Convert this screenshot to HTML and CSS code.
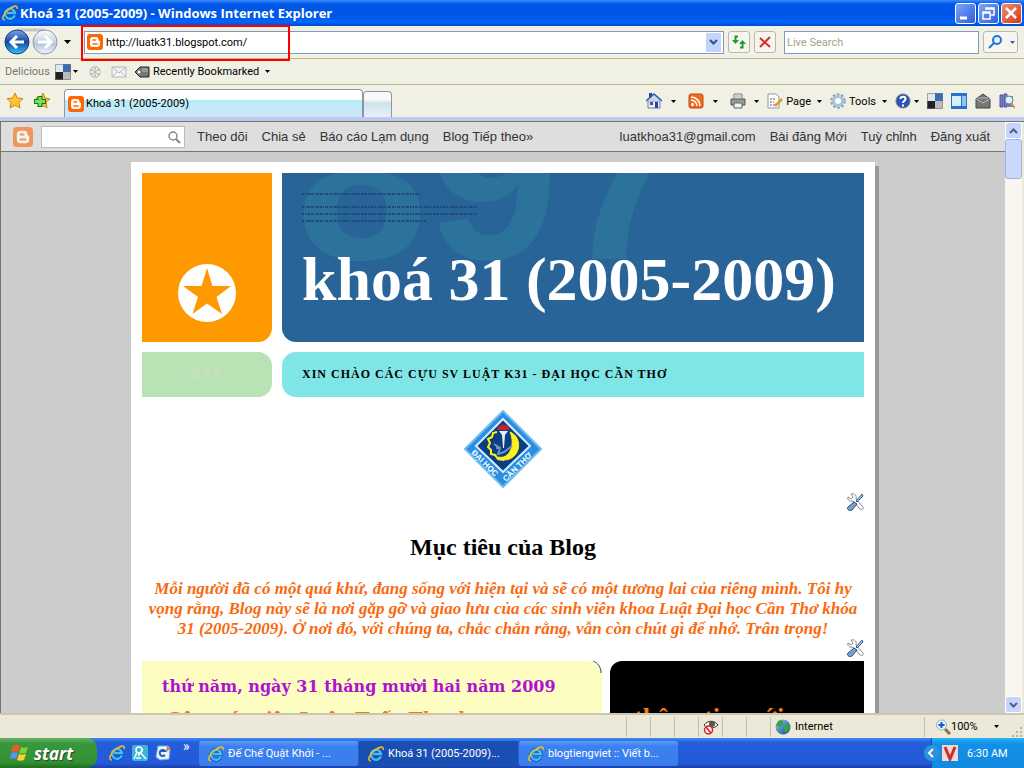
FILE: index.html
```
<!DOCTYPE html>
<html lang="vi">
<head>
    <meta charset="UTF-8">
    <title>Khoá 31 (2005-2009)</title>
    <meta name="viewport" content="width=device-width, initial-scale=1">
    <link rel="stylesheet" href="styles.css">
</head>
<body>
<svg class="defs" aria-hidden="true">
    <defs>
        <linearGradient id="ball" x1="0" y1="0" x2="0" y2="1"><stop offset="0" stop-color="#7aa9e8"/><stop offset=".5" stop-color="#14489f"/><stop offset="1" stop-color="#35c3ff"/></linearGradient>
        <linearGradient id="silver" x1="0" y1="0" x2="0" y2="1"><stop offset="0" stop-color="#fff"/><stop offset=".6" stop-color="#b9c7dc"/><stop offset="1" stop-color="#eef8ff"/></linearGradient>
        <linearGradient id="earth" x1="0" y1="0" x2="1" y2="1"><stop offset="0" stop-color="#8fd0ff"/><stop offset="1" stop-color="#0a3f9e"/></linearGradient>
        <symbol id="ie" viewBox="0 0 16 16">
            <path d="M12.8 10.4A5 5 0 1 1 13 8H5" fill="none" stroke="#0b4fae" stroke-width="3.6"/>
            <path d="M12.8 10.4A5 5 0 1 1 13 8H5" fill="none" stroke="#45bdf5" stroke-width="2.4"/>
            <path d="M3 15C-1 15 1 9 6 5S16-1 15 4" fill="none" stroke="#f4b62c" stroke-width="1.6"/>
        </symbol>
        <symbol id="blogger" viewBox="0 0 16 16">
            <rect width="16" height="16" rx="3" fill="#f60"/>
            <path d="M6 3h3a2.5 2.5 0 0 1 2.5 2.5c0 1 .3 1.3 1.5 1.5v3a3 3 0 0 1-3 3H6a3 3 0 0 1-3-3V6a3 3 0 0 1 3-3z" fill="#fff"/>
            <path d="M6 6h2.5M6 10h4" stroke="#f60" stroke-width="1.5" stroke-linecap="round"/>
        </symbol>
        <symbol id="arrow" viewBox="0 0 7 4"><path d="M0 0h7L3.5 4z" fill="#000"/></symbol>
        <symbol id="wrench" viewBox="0 0 18 18">
            <path d="M2 4l3 2 2-2-2-3c4-1 6 2 5 5l7 8c1 2-1 3-3 2L7 8C4 9 1 7 2 4z" fill="#fff" stroke="#888"/>
            <path d="M16 1l1 2-6 6-1-1z" fill="#a8c9ee" stroke="#2c5f9e"/>
            <path d="M8 9l3 2-5 6c-2 2-6-1-4-3z" fill="#7fa2c4" stroke="#1d4f86"/>
        </symbol>
        <symbol id="squares" viewBox="0 0 16 16">
            <rect width="16" height="16" fill="#fff"/><path d="M8 0h8v8H8z" fill="#3a6bb5"/><path d="M0 8h8v8H0z" fill="#222"/><path d="M8 8h8v8H8z" fill="#bbb"/><path d="M0 0h8v8H0z" fill="#e4e8ee"/>
            <path d="M.5.5h15v15H.5z" fill="none" stroke="#777" stroke-opacity=".6"/>
        </symbol>
    </defs>
</svg>

<div class="window">
    <header class="titlebar">
        <svg class="i16"><use href="#ie"/></svg>
        <span class="caption">Khoá 31 (2005-2009) - Windows Internet Explorer</span>
        <button class="winbtn" aria-label="Minimize"><svg viewBox="0 0 19 19"><path d="M4 14h7" stroke="#fff" stroke-width="3"/></svg></button>
        <button class="winbtn" aria-label="Restore"><svg viewBox="0 0 19 19"><path d="M7 6V4h8v7h-3M4 8h7v7H4zM4 9h7M7 5h8" fill="none" stroke="#fff" stroke-width="1.5"/></svg></button>
        <button class="winbtn close" aria-label="Close"><svg viewBox="0 0 19 19"><path d="M4 4l10 10M14 4L4 14" stroke="#fff" stroke-width="2.5"/></svg></button>
    </header>

    <div class="bar address">
        <button class="plain travel" aria-label="Back and forward">
            <svg width="54" height="28" viewBox="0 0 54 28">
                <path d="M13 2h28" stroke="#c5c8ca" stroke-width="3"/>
                <circle cx="13" cy="14" r="12" fill="url(#ball)" stroke="#1b3d7c"/>
                <path d="M20 14H8M13 8l-6 6 6 6" fill="none" stroke="#fff" stroke-width="3"/>
                <circle cx="41" cy="14" r="12" fill="url(#silver)" stroke="#8b98ac"/>
                <path d="M34 14h12M41 8l6 6-6 6" fill="none" stroke="#fff" stroke-width="3"/>
            </svg>
        </button>
        <svg class="arr"><use href="#arrow"/></svg>
        <div class="field url">
            <svg class="i16"><use href="#blogger"/></svg>
            <input type="text" aria-label="Address" value="http://luatk31.blogspot.com/">
            <button class="drop" aria-label="Show addresses"><svg width="9" height="6" viewBox="0 0 9 6"><path d="M1 1l3.5 3.5L8 1" fill="none" stroke="#36518c" stroke-width="2"/></svg></button>
            <span class="highlight"></span>
        </div>
        <button class="square" aria-label="Refresh"><svg class="i16" viewBox="0 0 16 16"><path d="M7 2.5H4.5V7M9 13.5h2.5V9" fill="none" stroke="#219a21" stroke-width="2"/><path d="M1 6h7l-3.5 4zM8 10h7l-3.5-4z" fill="#219a21"/></svg></button>
        <button class="square" aria-label="Stop"><svg class="i16" viewBox="0 0 16 16"><path d="M3 4l10 9M13 3L3 13" stroke="#d32f2f" stroke-width="2"/></svg></button>
        <div class="field search"><input type="text" aria-label="Live Search" placeholder="Live Search"></div>
        <button class="square go" aria-label="Search">
            <svg class="i16" viewBox="0 0 16 16"><circle cx="10" cy="6" r="4" fill="#e6f3ff" stroke="#2070dd" stroke-width="2"/><path d="M7 9l-5 5" stroke="#2070dd" stroke-width="2"/></svg>
            <svg class="small" viewBox="0 0 7 4"><path d="M0 0h7L3.5 4z" fill="#2463c5"/></svg>
        </button>
    </div>

    <div class="bar bookmarks">
        <span class="delicious">Delicious</span>
        <svg class="i16"><use href="#squares"/></svg>
        <svg class="arr"><use href="#arrow"/></svg>
        <svg class="i16" viewBox="0 0 16 16"><path d="M8 2v12M3 5l10 6M13 5L3 11M6 2l2 3 2-3M6 14l2-3 2 3M2 7l3-1V3M14 9l-3 1v3M2 9l3 1v3M14 7l-3-1V3" fill="none" stroke="#b5b5b5"/></svg>
        <svg class="i16 mail" viewBox="0 0 16 16"><path d="M1 3h14v10H1zM1 3l7 6 7-6M1 13l5-5M15 13l-5-5" fill="#f6f6f6" stroke="#b5b5b5"/></svg>
        <button class="plain recent">
            <svg class="i16" viewBox="0 0 16 16"><path d="M1 8l5-5h9v10H6z" fill="#777" stroke="#222"/><circle cx="5" cy="8" r="1.5" fill="#fff"/><path d="M8 5h6M8 7h6" stroke="#bbb"/></svg>
            Recently Bookmarked
            <svg class="arr"><use href="#arrow"/></svg>
        </button>
    </div>

    <div class="bar tabs">
        <svg class="i16" viewBox="0 0 16 16"><path d="M8 0l2.3 5 5.7.6-4.2 3.9L13 15l-5-2.8L3 15l1.2-5.5L0 5.6 5.7 5z" fill="#ffc52f" stroke="#c98617"/></svg>
        <svg class="i16 addfav" viewBox="0 0 16 16"><path d="M9 0l2 5 5 1-4 3 1 6-5-3-4 2 1-5-3-4 5-1z" fill="#ffc52f" stroke="#c98617"/><path d="M6 3v11M0 8.5h12" stroke="#137a13" stroke-width="5"/><path d="M6 4v9M1 8.5h10" stroke="#7ddc62" stroke-width="3"/></svg>
        <button class="tab"><svg class="i16"><use href="#blogger"/></svg>Khoá 31 (2005-2009)</button>
        <button class="newtab" aria-label="New tab"></button>
        <div class="commands">
            <svg class="i16" viewBox="0 0 16 16"><path d="M2 8h12v7H2z" fill="#e8edf6" stroke="#6a7fa6"/><path d="M0 8l8-7 8 7" fill="#c7d4ec" stroke="#3256a4" stroke-width="1.5"/><path d="M3 0h3v4H3zM9 9h3v6H9z" fill="#2645a8"/><path d="M4 9h3v3H4z" fill="#557"/></svg>
            <svg class="arr wide"><use href="#arrow"/></svg>
            <svg class="i16" viewBox="0 0 16 16"><rect x="1" y="1" width="14" height="14" rx="2" fill="#f26a1b" stroke="#b94c10"/><circle cx="4.5" cy="11.5" r="1.5" fill="#fff"/><path d="M3 7a6 6 0 0 1 6 6M3 4a9 9 0 0 1 9 9" fill="none" stroke="#fff" stroke-width="1.5"/></svg>
            <svg class="arr wide"><use href="#arrow"/></svg>
            <svg class="i16" viewBox="0 0 16 16"><path d="M4 1h8v6H4z" fill="#fff" stroke="#777"/><path d="M1 6h14v6H1z" fill="#999" stroke="#555"/><path d="M4 10h8v5H4z" fill="#e6f5f5" stroke="#666"/><path d="M5 3h6M5 5h6" stroke="#999"/></svg>
            <svg class="arr"><use href="#arrow"/></svg>
            <button class="plain"><svg class="i16" viewBox="0 0 16 16"><path d="M1 1h8l3 3v11H1z" fill="#fff" stroke="#8e95a5"/><path d="M3 6h6M3 9h4M3 12h5" stroke="#557" stroke-dasharray="2 1"/><path d="M15 6l-7 7" stroke="#e29b24" stroke-width="2.5"/></svg>Page<svg class="arr"><use href="#arrow"/></svg></button>
            <button class="plain"><svg class="i16" viewBox="0 0 16 16"><circle cx="8" cy="8" r="6.5" fill="none" stroke="#8aa0b3" stroke-width="2.5" stroke-dasharray="2.5 1.6"/><circle cx="8" cy="8" r="4.5" fill="#fff" stroke="#a7c5dc" stroke-width="3"/></svg>Tools<svg class="arr"><use href="#arrow"/></svg></button>
            <button class="plain help" aria-label="Help"><svg class="i16" viewBox="0 0 16 16"><circle cx="8" cy="8" r="7" fill="#2a55b8" stroke="#778"/><path d="M5.5 6c0-3 5-3 5 0 0 2-2.5 2-2.5 4M8 11.5v2" fill="none" stroke="#fff" stroke-width="2"/></svg><svg class="arr"><use href="#arrow"/></svg></button>
            <svg class="i16"><use href="#squares"/></svg>
            <svg class="i16" viewBox="0 0 16 16"><path d="M0 0h16v16H0z" fill="#2872cc"/><path d="M1 3h9v10H1z" fill="#d8efff"/><path d="M11 3h4v10h-4z" fill="#8fc5f4"/></svg>
            <svg class="i16" viewBox="0 0 16 16"><path d="M1 6l7-5 7 5v9H1z" fill="#777" stroke="#444"/><path d="M1 6l7 4 7-4M3 5h10" fill="none" stroke="#bbb"/></svg>
            <svg class="i16" viewBox="0 0 16 16"><path d="M1 2h3v12H1zM5 1h3v13H5z" fill="#7777cf" stroke="#5252a1"/><path d="M8 3h6v11H8z" fill="#7777cf"/><circle cx="10" cy="7" r="4" fill="#d7f4ff" stroke="#688"/><path d="M12 10l4 5" stroke="#d89530" stroke-width="2"/></svg>
        </div>
    </div>

    <div class="viewport">
        <main class="page">
            <nav class="blognav">
                <svg class="bloglogo"><use href="#blogger"/></svg>
                <div class="blogsearch"><input type="text" aria-label="Search this blog"><svg width="14" height="14" viewBox="0 0 14 14"><circle cx="6" cy="6" r="4" fill="none" stroke="#888" stroke-width="1.5"/><path d="M9 9l4 4" stroke="#888" stroke-width="2"/></svg></div>
                <a href="#">Theo dõi</a>
                <a href="#">Chia sẻ</a>
                <a href="#">Báo cáo Lạm dụng</a>
                <a href="#">Blog Tiếp theo»</a>
                <a href="#" class="account">luatkhoa31@gmail.com</a>
                <a href="#">Bài đăng Mới</a>
                <a href="#">Tuỳ chỉnh</a>
                <a href="#">Đăng xuất</a>
            </nav>

            <div class="blog">
                <div class="head">
                    <div class="badge-box"><svg width="58" height="58" viewBox="0 0 58 58"><circle cx="29" cy="29" r="29" fill="#fff"/><path d="M29 4l5.5 18H53L38.5 33 44 50 29 39.5 14.5 50 20 33 5 22h18.5z" fill="#f90"/></svg></div>
                    <div class="hero">
                        <span class="ghost" aria-hidden="true">897</span>
                        <svg class="scribble" width="176" height="32" viewBox="0 0 176 32"><path d="M0 2h118M0 15h176M0 22h176M0 29h124" stroke="#1b4a78" stroke-width="2" stroke-dasharray="2 1 1 1 3 1"/></svg>
                        <h1>khoá 31 (2005-2009)</h1>
                    </div>
                    <div class="number">897</div>
                    <div class="welcome">XIN CHÀO CÁC CỰU SV LUẬT K31 - ĐẠI HỌC CẦN THƠ</div>
                </div>

                <svg class="crest" width="78" height="78" viewBox="0 0 78 78">
                    <defs>
                        <path id="leftside" d="M7 43l31 31"/>
                        <path id="rightside" d="M42 72l31-31"/>
                    </defs>
                    <path d="M39 1l38 38-38 38L1 39z" fill="#2a8ee0" stroke="#70bdf0" stroke-width="2"/>
                    <path d="M39 9l27 27-27 26L12 36z" fill="#0b3f83" stroke="#d8eeff" stroke-width="2"/>
                    <path d="M46 22c14 6 10 27-5 28-3 0-6-1-7-3 11 3 18-12 12-25z" fill="#fff21c" stroke="#fff21c"/>
                    <path d="M33 22l-4 1-1 4-4 2 2 4-2 4 3 3 0 4 4 1 3 4 6 1" fill="none" stroke="#fff21c" stroke-width="2"/>
                    <path d="M30 34l6 4-2 6 6-2 8-6M32 38l4 0" fill="none" stroke="#6f91c7" stroke-width="2"/>
                    <path d="M35 21h9l-3 4-1 13h-1l-1-13z" fill="#e7eefa"/>
                    <path d="M34 20c-2-4 3-4 5-6 2 2 7 1 6 6z" fill="#c91e2e"/>
                    <text class="cresttext"><textPath href="#leftside">ĐẠI HỌC</textPath></text>
                    <text class="cresttext"><textPath href="#rightside">CẦN THƠ</textPath></text>
                </svg>
                <a href="#" class="edit" aria-label="Edit"><svg width="18" height="18"><use href="#wrench"/></svg></a>

                <h2>Mục tiêu của Blog</h2>
                <p class="quote">Mỗi người đã có một quá khứ, đang sống với hiện tại và sẽ có một tương lai của riêng mình. Tôi hy<br>vọng rằng, Blog này sẽ là nơi gặp gỡ và giao lưu của các sinh viên khoa Luật Đại học Cần Thơ khóa<br>31 (2005-2009). Ở nơi đó, với chúng ta, chắc chắn rằng, vẫn còn chút gì để nhớ. Trân trọng!</p>
                <a href="#" class="edit" aria-label="Edit"><svg width="18" height="18"><use href="#wrench"/></svg></a>

                <div class="columns">
                    <article class="posts">
                        <svg class="corner" width="10" height="12" viewBox="0 0 10 12"><path d="M1 0c5 2 8 6 8 12" fill="none" stroke="#28527a"/></svg>
                        <p class="date">thứ năm, ngày 31 tháng mười hai năm 2009</p>
                        <h3>Cộng tác viên Luân Tuấn Thanh</h3>
                    </article>
                    <aside class="side"><h3>thông tin mới</h3></aside>
                </div>
            </div>
        </main>

        <div class="scroll">
            <button aria-label="Scroll up"><svg width="9" height="6" viewBox="0 0 9 6"><path d="M1 5l3.5-3.5L8 5" fill="none" stroke="#4d6185" stroke-width="2"/></svg></button>
            <div class="thumb"></div>
            <button class="down" aria-label="Scroll down"><svg width="9" height="6" viewBox="0 0 9 6"><path d="M1 1l3.5 3.5L8 1" fill="none" stroke="#4d6185" stroke-width="2"/></svg></button>
        </div>
    </div>

    <div class="status">
        <span class="cell"></span><span class="cell"></span><span class="cell"></span>
        <span class="cell"><svg class="i16" viewBox="0 0 16 16"><path d="M1 6c4-5 10-5 14 0-4 4-10 4-14 0z" fill="#fff" stroke="#333"/><circle cx="9" cy="5" r="3" fill="#555"/><circle cx="5.5" cy="11" r="4" fill="#fff" stroke="#d52020" stroke-width="1.5"/><path d="M3 8l5 6" stroke="#d52020" stroke-width="1.5"/></svg></span>
        <span class="cell"></span><span class="cell"></span>
        <span class="cell zone"><svg class="i16" viewBox="0 0 16 16"><circle cx="8" cy="8" r="7.5" fill="url(#earth)"/><path d="M3 2c4-2 6 0 5 3L5 8 1 7zM9 6l5-1 1 4-4 5-2-3zM3 10l3 1 1 4-3-2z" fill="#3ba53b"/></svg>Internet</span>
        <span class="cell zoomcell"><svg class="i16" viewBox="0 0 16 16"><path d="M10 10l5 5" stroke="#8c6c4c" stroke-width="3"/><circle cx="6.5" cy="6" r="5" fill="#e5f3ff" stroke="#91b0d0"/><path d="M6.5 3v6M3.5 6h6" stroke="#1a59bf" stroke-width="2"/></svg>100%<svg class="arr"><use href="#arrow"/></svg></span>
        <svg class="grip" width="11" height="11" viewBox="0 0 11 11"><path d="M8 0h2v2H8zM4 4h2v2H4zM8 4h2v2H8zM0 8h2v2H0zM4 8h2v2H4zM8 8h2v2H8z" fill="#b8b4a2"/></svg>
    </div>

    <footer class="taskbar">
        <button class="start"><svg width="19" height="18" viewBox="0 0 19 18"><path d="M3 2c3-2 5-1 7 0L8 8C6 7 4 7 1 8z" fill="#f0582a"/><path d="M11 3c2 1 4 1 7 0l-2 6c-3 1-5 1-7 0z" fill="#7fd13a"/><path d="M1 9c3-1 5-1 7 0l-2 6c-2-1-4-1-6 0z" fill="#5b92f5"/><path d="M9 10c2 1 4 1 7 0l-2 6c-3 1-5 1-7 0z" fill="#fcd330"/></svg>start</button>
        <div class="quick">
            <svg class="i16"><use href="#ie"/></svg>
            <svg class="i16" viewBox="0 0 16 16"><rect width="16" height="16" rx="2" fill="#3fb2d8"/><circle cx="7" cy="5" r="3" fill="none" stroke="#fff" stroke-width="1.5"/><path d="M5 7l-3 7M8 7l6 7M6 11l5-7M4 13h5" stroke="#e9ffff" stroke-width="1.5"/></svg>
            <svg class="i16" viewBox="0 0 16 16"><path d="M3 1h10l2 3-1 10-9 1-4-3z" fill="#eaf4ff" stroke="#7aa9dd"/><path d="M10 10a3 3 0 1 1 0-4H5" fill="none" stroke="#245fb5" stroke-width="2"/><path d="M12 1l3 3-4 3z" fill="#de7140"/></svg>
            <span class="more">»</span>
        </div>
        <button class="task"><svg class="i16"><use href="#ie"/></svg>Đế Chế Quật Khởi - ...</button>
        <button class="task active"><svg class="i16"><use href="#ie"/></svg>Khoá 31 (2005-2009)...</button>
        <button class="task"><svg class="i16"><use href="#ie"/></svg>blogtiengviet :: Viết b...</button>
        <div class="tray">
            <button class="expand" aria-label="Show hidden icons"><svg width="16" height="16" viewBox="0 0 16 16"><circle cx="8" cy="8" r="8" fill="#2d91df"/><path d="M9 4L5 8l4 4" fill="none" stroke="#fff" stroke-width="2"/></svg></button>
            <svg class="i16" viewBox="0 0 16 16"><rect width="16" height="16" fill="#f5d6d2"/><path d="M3 2l5 12 5-12" fill="none" stroke="#c5302f" stroke-width="3"/></svg>
            <span>6:30 AM</span>
        </div>
    </footer>
</div>
</body>
</html>
```
FILE: styles.css
```
* { box-sizing: border-box; }
body {
    margin: 0;
    font-family: Roboto, "Noto Sans", sans-serif;
    font-size: 11px;
    color: #000;
}
button, input { font: inherit; color: inherit; margin: 0; padding: 0; }
button { border: 0; background: none; white-space: nowrap; }
svg { display: block; flex: none; }
.defs { position: absolute; width: 0; height: 0; }
.i16 { width: 16px; height: 16px; }
.arr { width: 5px; height: 3px; }
.plain { display: flex; align-items: center; gap: 3px; }

.window {
    display: flex;
    flex-direction: column;
    height: 100vh;
    overflow: hidden;
    background: #ece9d8;
}

/* title bar */
.titlebar {
    display: flex;
    align-items: center;
    gap: 2px;
    flex: none;
    height: 26px;
    padding: 0 2px;
    background: linear-gradient(#3b8cff, #0058ea 15%, #0055e5 60%, #0066ff 85%, #0048c8);
}
.caption {
    flex: 1;
    font-family: "Open Sans", sans-serif;
    font-size: 13px;
    font-weight: bold;
    color: #fff;
}
.winbtn {
    width: 21px;
    height: 21px;
    border: 1px solid #fff;
    border-radius: 3px;
    background: linear-gradient(135deg, #7ea5f5, #2a5ee0);
}
.close { background: linear-gradient(135deg, #ee8f70, #d03a16); }

/* toolbars */
.bar {
    display: flex;
    align-items: center;
    flex: none;
    background: #f1f0e5;
    border-bottom: 1px solid #b9b78e;
}
.address { height: 33px; padding: 0 6px 0 4px; }
.address .arr { width: 7px; height: 4px; margin: 0 13px 0 6px; }
.field {
    display: flex;
    align-items: center;
    height: 23px;
    border: 1px solid #7f9db9;
    background: #fff;
}
.field input { flex: 1; min-width: 0; border: 0; outline: 0; background: none; }
.url { position: relative; flex: 1; gap: 3px; padding: 0 2px; }
.highlight {
    position: absolute;
    left: -4px;
    top: -7px;
    width: 209px;
    height: 36px;
    border: 2px solid #f00;
    pointer-events: none;
}
.drop {
    display: flex;
    align-items: center;
    justify-content: center;
    width: 15px;
    height: 19px;
    background: #c3d3fb;
}
.square {
    display: flex;
    align-items: center;
    justify-content: center;
    width: 22px;
    height: 22px;
    margin-left: 4px;
    border: 1px solid #b9b9b3;
    border-radius: 3px;
    background: #f7f6ee;
}
.search { width: 195px; margin-left: 8px; padding-left: 2px; }
.search input::placeholder { color: #a3a386; opacity: 1; }
.go { width: 35px; gap: 7px; }
.small { width: 5px; height: 3px; }
.bookmarks { height: 26px; padding-left: 5px; }
.delicious { width: 50px; color: #777; }
.bookmarks > .arr { margin: 0 9px 0 2px; }
.mail { margin: 0 7px 0 8px; }
.recent .arr { margin-left: 3px; }

.tabs {
    height: 36px;
    padding: 0 9px 0 7px;
    border-bottom: 4px solid #bdc9ee;
}
.addfav { margin: 0 14px 0 11px; }
.tab, .newtab { border: 1px solid #8f93a8; border-bottom: 0; border-radius: 4px 4px 0 0; }
.tab {
    display: flex;
    align-items: center;
    align-self: flex-end;
    gap: 2px;
    width: 299px;
    height: 28px;
    padding: 0 3px;
    background: linear-gradient(#fff 35%, #b5edf5 36%, #cfe6fb);
}
.newtab {
    align-self: flex-end;
    width: 29px;
    height: 26px;
    background: linear-gradient(#f8f8f8 30%, #c9e4ea 45%, #eef0fb);
}
.commands { display: flex; align-items: center; gap: 8px; margin-left: auto; }
.wide { margin: 0 4px 0 1px; }
.commands .plain .arr { margin-left: 3px; }
.commands .help .arr { margin-left: 0; }

/* page area */
.viewport {
    display: flex;
    flex: 1;
    min-height: 0;
    border: solid #77756a;
    border-width: 1px 0 0 1px;
}
.page { flex: 1; min-width: 0; overflow: hidden; background: #ccc; }
.blognav {
    display: flex;
    align-items: center;
    gap: 14px;
    height: 30px;
    padding: 0 15px 0 12px;
    border-bottom: 1px solid #777;
    background: #dedede;
    font-family: "Liberation Sans", sans-serif;
    font-size: 13px;
    white-space: nowrap;
}
.blognav a { color: #333; text-decoration: none; }
.bloglogo { width: 20px; height: 20px; opacity: .6; }
.blogsearch {
    display: flex;
    align-items: center;
    width: 144px;
    height: 22px;
    margin: 0 -2px 0 -6px;
    padding: 0 3px;
    border: 1px solid #bbb;
    background: #fff;
}
.blogsearch input { flex: 1; min-width: 0; border: 0; outline: 0; }
.account { margin-left: auto; }

.blog {
    width: 744px;
    max-width: 100%;
    height: 700px;
    margin: 10px auto 0;
    padding: 11px;
    background: #fff;
    box-shadow: 4px 4px 0 #999;
    font-family: "Liberation Serif", serif;
}
.head {
    display: grid;
    grid-template-columns: 130px 1fr;
    grid-template-rows: 169px 45px;
    gap: 10px;
}
.badge-box {
    display: flex;
    align-items: flex-end;
    justify-content: center;
    padding-bottom: 20px;
    border-radius: 0 0 14px 0;
    background: #f90;
}
.hero {
    position: relative;
    overflow: hidden;
    padding: 70px 20px 0;
    border-radius: 0 0 0 14px;
    background: #296498;
}
.hero h1 {
    position: relative;
    margin: 0;
    font-size: 62px;
    line-height: 72px;
    color: #fff;
    white-space: nowrap;
}
.ghost {
    position: absolute;
    left: 14px;
    bottom: 47px;
    font: bold 236px/236px "Liberation Sans", sans-serif;
    color: #2c739c;
}
.scribble { position: absolute; left: 20px; top: 19px; }
.number, .welcome { display: flex; align-items: center; }
.number {
    justify-content: center;
    border-radius: 0 14px 14px 0;
    background: #b8e3b5;
    font: bold 16px "Liberation Sans", sans-serif;
    letter-spacing: 2px;
    color: #c9dfc0;
}
.welcome {
    padding-left: 20px;
    border-radius: 14px 0 0 14px;
    background: #80e5e6;
    font-size: 12px;
    font-weight: bold;
    letter-spacing: 1px;
}
.crest { margin: 13px auto 5px; }
.cresttext { font: bold 8px "Liberation Sans", sans-serif; fill: #fff; }
.edit { display: flex; justify-content: flex-end; }
.blog h2 {
    margin: 22px 0 18px;
    font-size: 24px;
    line-height: 28px;
    text-align: center;
}
.quote {
    margin: 0;
    font-size: 17px;
    line-height: 20px;
    font-weight: bold;
    font-style: italic;
    text-align: center;
    white-space: nowrap;
    color: #f96a10;
}
.columns {
    display: grid;
    grid-template-columns: 460px 1fr;
    gap: 8px;
    margin-top: 4px;
}
.posts, .side { height: 120px; }
.posts { position: relative; padding: 14px 20px; border-radius: 0 12px 0 0; background: #fdfdc2; }
.corner { position: absolute; top: 0; right: 0; }
.date {
    margin: 0;
    font: bold 16px/24px "DejaVu Serif", serif;
    color: #ae12d0;
}
.columns h3 {
    margin: 4px 0 0 4px;
    font: bold 22px/32px "Liberation Serif", serif;
    color: #f37a10;
    white-space: nowrap;
}
.side { padding: 37px 20px; border-radius: 12px 0 0 0; background: #000; }
.side h3 { font-size: 26px; }

/* scroll bar */
.scroll {
    display: flex;
    flex-direction: column;
    flex: none;
    width: 17px;
    margin-right: 2px;
    background: #f7f6f0;
}
.scroll button {
    display: flex;
    align-items: center;
    justify-content: center;
    height: 17px;
    border: 1px solid #fff;
    border-radius: 3px;
    background: #c6d5fc;
}
.thumb { height: 40px; border: 1px solid #9fb5e8; border-radius: 3px; background: #c9d8fc; }
.scroll .down { margin-top: auto; }

/* status bar */
.status {
    display: flex;
    align-items: center;
    justify-content: flex-end;
    flex: none;
    height: 25px;
    border-top: 2px solid #c9c6b6;
    background: #ece9d8;
}
.cell {
    display: flex;
    align-items: center;
    width: 24px;
    height: 20px;
    padding-left: 4px;
    border-left: 1px solid #c2bfae;
}
.zone { width: 154px; gap: 4px; }
.zoomcell { width: 87px; padding-left: 10px; }
.zoomcell .arr { margin-left: 16px; }
.grip { align-self: flex-end; margin: 0 1px; }

/* task bar */
.taskbar {
    display: flex;
    align-items: stretch;
    flex: none;
    height: 30px;
    background: linear-gradient(#3f8cf3, #245edb 15%, #2259d8 85%, #1941a5);
    color: #fff;
}
.start {
    display: flex;
    align-items: center;
    gap: 5px;
    width: 97px;
    padding-left: 10px;
    border-radius: 0 10px 10px 0;
    background: linear-gradient(#62b262, #3a963a 20%, #339133 80%, #1f6d1f);
    font: italic bold 17px "Open Sans", sans-serif;
    text-shadow: 1px 1px 1px #234b23;
}
.quick { display: flex; align-items: center; gap: 7px; width: 102px; padding-left: 12px; }
.more { align-self: flex-start; margin-left: 5px; font-size: 14px; }
.task {
    display: flex;
    align-items: center;
    gap: 4px;
    width: 159px;
    margin: 3px 1px 2px 0;
    padding-left: 9px;
    border-radius: 3px;
    background: linear-gradient(#5fa0f8, #3c81f0 20%, #3a7cec);
}
.active { background: #1b4eb3; }
.tray {
    display: flex;
    align-items: center;
    gap: 9px;
    width: 93px;
    margin-left: auto;
    border-left: 1px solid #0b53b4;
    background: linear-gradient(#28b5f5, #1290e8 20%, #1189e0);
}
.tray .expand { margin: 0 -7px 0 -8px; }
```
